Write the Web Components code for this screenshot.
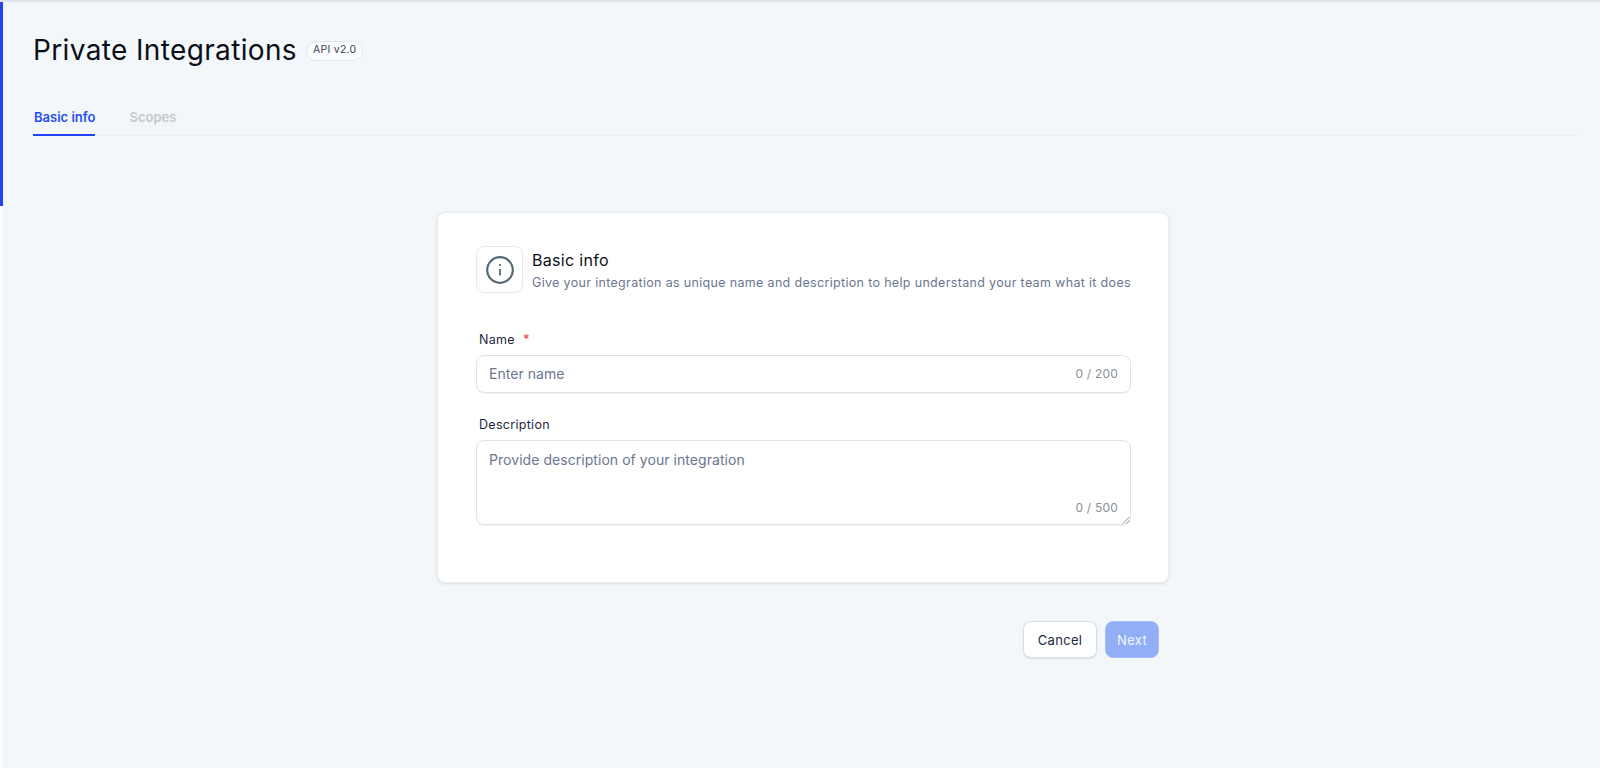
<!DOCTYPE html>
<html lang="en"><head><meta charset="utf-8"><title>Private Integrations</title>
<style>
html,body{margin:0;height:100%;overflow:hidden}
body{font-family:Inter,"Noto Sans",sans-serif;background:#f3f7fa}
</style></head><body>
<pi-app></pi-app>
<template id="t-app"><style>
:host{display:flex;height:768px;box-sizing:border-box;border-top:2px solid #dfe2e6;color:#0b0f19;position:relative}
.rail{flex:0 0 3px;display:flex;flex-direction:column;background:linear-gradient(90deg,#fcfdfe 2px,transparent 2px)}
.rail i{display:block;height:204px;background:#1f43f5}
main{flex:1;min-width:0;display:flex;flex-direction:column;padding:0 23px 0 30px}
.center{display:flex;flex-direction:column;align-items:flex-start;padding-left:404px}
.foot{display:flex;justify-content:flex-end;gap:8px;width:722px;margin-top:38px}
</style><div class="rail"><i></i></div><main>
<pi-header></pi-header>
<pi-tabs></pi-tabs>
<div class="center">
<pi-card>
<pi-card-head title="Basic info" sub="Give your integration as unique name and description to help understand your team what it does"></pi-card-head>
<pi-field label="Name" required placeholder="Enter name" count="0 / 200"></pi-field>
<pi-field label="Description" multiline placeholder="Provide description of your integration" count="0 / 500"></pi-field>
</pi-card>
<div class="foot"><pi-button>Cancel</pi-button><pi-button primary>Next</pi-button></div>
</div></main></template>

<template id="t-header"><style>
:host{display:flex;align-items:center;gap:9px;height:32px;margin-top:32px}
h1{margin:0;font:400 28px/32px Inter,sans-serif;letter-spacing:.36px;color:#0b0f19}
span{display:inline-flex;align-items:center;box-sizing:border-box;height:20px;padding:0 6px;border:1px solid #e3e6ec;border-radius:10px;background:#fbfcfd;font:400 10.5px/1 Inter,sans-serif;letter-spacing:.25px;color:#3a4257;margin-top:1px}
</style><h1>Private Integrations</h1><span>API v2.0</span></template>

<template id="t-tabs"><style>
:host{display:flex;gap:33px;margin-top:39px;height:30px;border-bottom:1px solid #ebeff3;width:1544px;box-sizing:content-box;margin-bottom:76px}
a{display:block;font:600 13px/16px Inter,sans-serif;padding:4px 0 0 1px;height:27px;color:#c4c8cd}
a.on{color:#1f4ff5;border-bottom:2px solid #1f43f5;height:25px}
</style><a class="on">Basic info</a><a>Scopes</a></template>

<template id="t-card"><style>
:host{display:flex;flex-direction:column;box-sizing:border-box;width:732px;height:371px;padding:33px 37px 0 38px;background:#fff;border-radius:8px;border:1px solid #e9edf2;box-shadow:0 1px 3px rgba(30,45,70,.12)}
</style><slot></slot></template>

<template id="t-head"><style>
:host{display:flex;gap:9px;margin-bottom:39px}
.ic{flex:none;width:47px;height:47px;box-sizing:border-box;border:1px solid #e6e9ee;border-radius:8px;display:flex;align-items:center;justify-content:center;background:#fff}
.t{font:400 16px/20px Inter,sans-serif;letter-spacing:.3px;color:#0b0f19;margin-top:4px}
.s{font:400 12.5px/16px Inter,sans-serif;color:#6b7690;margin-top:5px;white-space:nowrap;letter-spacing:.33px}
</style><div class="ic"><svg width="30" height="30" viewBox="0 0 30 30" fill="none" stroke="#566a75"><circle cx="15" cy="15" r="12.8" stroke-width="2.2"/><path d="M15 14v6.5" stroke-width="1.8"/><circle cx="15" cy="10" r="1.1" fill="#566a75" stroke="none"/></svg></div>
<div><div class="t"></div><div class="s"></div></div></template>

<template id="t-field"><style>
:host{display:flex;flex-direction:column;margin-bottom:24px}
label{font:400 12.5px/16px Inter,sans-serif;letter-spacing:.3px;color:#1f2840;padding-left:3px;margin-bottom:7px;display:flex;gap:8px}
label b{color:#ef3f3f;font-weight:500}
.box{position:relative;box-sizing:border-box;height:38px;border:1px solid #dfe2e8;border-radius:8px;background:#fff;padding:0 12px;display:flex;align-items:center;justify-content:space-between;box-shadow:0 1px 1px rgba(30,45,70,.05)}
.ph{font:400 14px/18px Inter,sans-serif;color:#6b7690;letter-spacing:.05px}
.c{font:400 12px/16px Inter,sans-serif;color:#8a9099;letter-spacing:.2px}
:host([multiline]) .box{height:85px;align-items:flex-start}
:host([multiline]) .ph{margin-top:10px}
:host([multiline]) .c{position:absolute;right:12px;bottom:8px}
svg{display:none;position:absolute;right:0;bottom:0}
:host([multiline]) svg{display:block}
</style><label><span class="l"></span><b hidden>*</b></label>
<div class="box"><span class="ph"></span><span class="c"></span>
<svg width="8" height="8" viewBox="0 0 9 9" stroke="#6d7278" stroke-width=".9"><path d="M1 8.5 8.5 1M5 8.5 8.5 5"/></svg></div></template>

<template id="t-btn"><style>
:host{display:flex;align-items:center;justify-content:center;box-sizing:border-box;height:37px;width:74px;border-radius:8px;border:1px solid #d9dde3;background:#fff;font:400 13px/16px Inter,sans-serif;letter-spacing:.3px;color:#1f2840;box-shadow:0 1px 2px rgba(30,45,70,.1)}
:host([primary]){width:54px;background:#91aef7;border-color:#a5bdf8;color:#f2f6fe;box-shadow:none}
</style><slot></slot></template>

<script>
function base(id,init){return class extends HTMLElement{constructor(){super();const r=this.attachShadow({mode:'open'});r.appendChild(document.getElementById(id).content.cloneNode(true));}connectedCallback(){if(init)init(this,this.shadowRoot);}}}
customElements.define('pi-app',base('t-app'));
customElements.define('pi-header',base('t-header'));
customElements.define('pi-tabs',base('t-tabs'));
customElements.define('pi-card',base('t-card'));
customElements.define('pi-button',base('t-btn'));
customElements.define('pi-card-head',base('t-head',(h,r)=>{r.querySelector('.t').textContent=h.getAttribute('title');r.querySelector('.s').textContent=h.getAttribute('sub');h.removeAttribute('title');}));
customElements.define('pi-field',base('t-field',(h,r)=>{r.querySelector('.l').textContent=h.getAttribute('label');r.querySelector('.ph').textContent=h.getAttribute('placeholder');r.querySelector('.c').textContent=h.getAttribute('count');if(h.hasAttribute('required'))r.querySelector('b').hidden=false;}));
</script>
</body></html>
